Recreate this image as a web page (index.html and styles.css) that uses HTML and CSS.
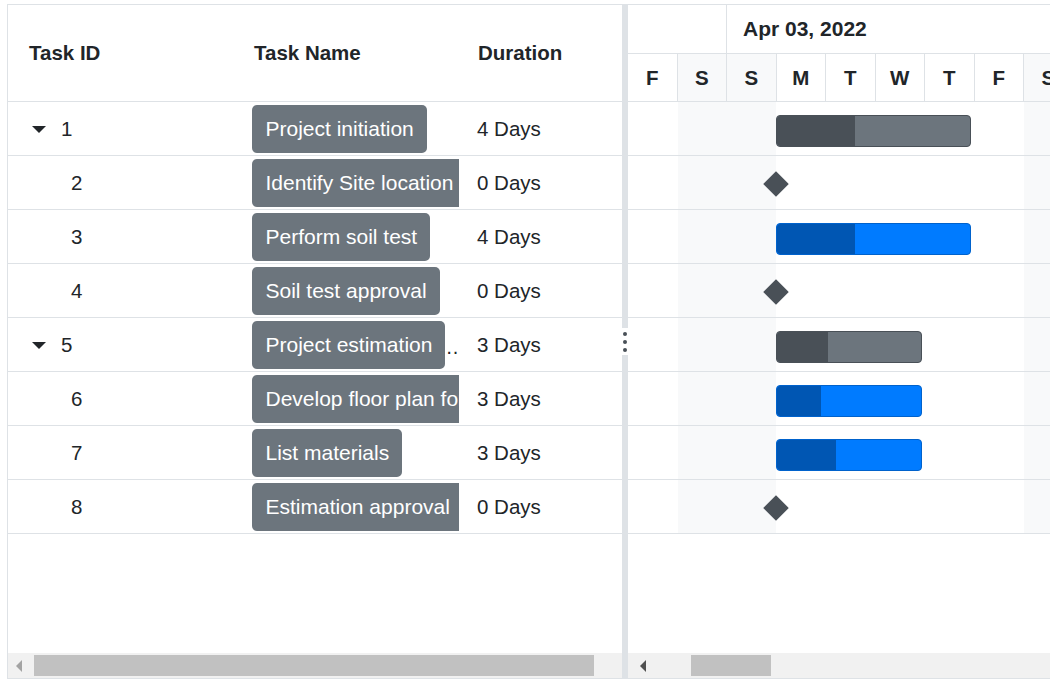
FILE: index.html
```html
<!DOCTYPE html>
<html>
<head>
<meta charset="utf-8">
<link rel="stylesheet" href="styles.css">
</head>
<body>
<div class="gantt">
  <div class="grid-pane">
    <div class="grid-head">
      <div class="hcell c-id">Task ID</div>
      <div class="hcell c-name">Task Name</div>
      <div class="hcell c-dur">Duration</div>
    </div>
    <div class="grid-body">
      <div class="row">
        <div class="cell c-id"><span class="caret"></span><span>1</span></div>
        <div class="cell c-name"><span class="chip">Project initiation</span></div>
        <div class="cell c-dur">4 Days</div>
      </div>
      <div class="row">
        <div class="cell c-id"><span class="child-id">2</span></div>
        <div class="cell c-name"><span class="chip">Identify Site location</span></div>
        <div class="cell c-dur">0 Days</div>
      </div>
      <div class="row">
        <div class="cell c-id"><span class="child-id">3</span></div>
        <div class="cell c-name"><span class="chip">Perform soil test</span></div>
        <div class="cell c-dur">4 Days</div>
      </div>
      <div class="row">
        <div class="cell c-id"><span class="child-id">4</span></div>
        <div class="cell c-name"><span class="chip">Soil test approval</span></div>
        <div class="cell c-dur">0 Days</div>
      </div>
      <div class="row">
        <div class="cell c-id"><span class="caret"></span><span>5</span></div>
        <div class="cell c-name"><span class="chip">Project estimation</span><span class="ellipsis">…</span></div>
        <div class="cell c-dur">3 Days</div>
      </div>
      <div class="row">
        <div class="cell c-id"><span class="child-id">6</span></div>
        <div class="cell c-name"><span class="chip">Develop floor plan for estimation</span></div>
        <div class="cell c-dur">3 Days</div>
      </div>
      <div class="row">
        <div class="cell c-id"><span class="child-id">7</span></div>
        <div class="cell c-name"><span class="chip">List materials</span></div>
        <div class="cell c-dur">3 Days</div>
      </div>
      <div class="row">
        <div class="cell c-id"><span class="child-id">8</span></div>
        <div class="cell c-name"><span class="chip">Estimation approval</span></div>
        <div class="cell c-dur">0 Days</div>
      </div>
    </div>
    <div class="filler"></div>
    <div class="hscroll">
      <div class="sb-btn"><svg width="7" height="12" viewBox="0 0 7 12"><polygon points="6,0 6,12 0,6" fill="#a3a3a3"/></svg></div>
      <div class="thumb thumb-left"></div>
    </div>
  </div>

  <div class="splitter">
    <div class="sp-top"></div>
    <div class="sp-handle"><span class="dot"></span><span class="dot"></span><span class="dot"></span></div>
    <div class="sp-bot"></div>
  </div>

  <div class="chart-pane">
    <div class="tl-head">
      <div class="tl-top">
        <div class="tl-week prev"></div>
        <div class="tl-week">Apr 03, 2022</div>
      </div>
      <div class="tl-days">
        <div class="day">F</div>
        <div class="day weekend">S</div>
        <div class="day weekend">S</div>
        <div class="day">M</div>
        <div class="day">T</div>
        <div class="day">W</div>
        <div class="day">T</div>
        <div class="day">F</div>
        <div class="day weekend">S</div>
      </div>
    </div>
    <div class="chart-body">
      <div class="crow">
        <div class="bar parent" style="left:148px;width:195px"><div class="prog" style="width:78px"></div></div>
      </div>
      <div class="crow">
        <div class="milestone"></div>
      </div>
      <div class="crow">
        <div class="bar child" style="left:148px;width:195px"><div class="prog" style="width:78px"></div></div>
      </div>
      <div class="crow">
        <div class="milestone"></div>
      </div>
      <div class="crow">
        <div class="bar parent" style="left:148px;width:146px"><div class="prog" style="width:51px"></div></div>
      </div>
      <div class="crow">
        <div class="bar child" style="left:148px;width:146px"><div class="prog" style="width:44px"></div></div>
      </div>
      <div class="crow">
        <div class="bar child" style="left:148px;width:146px"><div class="prog" style="width:59px"></div></div>
      </div>
      <div class="crow">
        <div class="milestone"></div>
      </div>
    </div>
    <div class="filler"></div>
    <div class="hscroll">
      <div class="sb-btn sb-btn-right"><svg width="7" height="12" viewBox="0 0 7 12"><polygon points="6,0 6,12 0,6" fill="#505050"/></svg></div>
      <div class="thumb thumb-right"></div>
    </div>
  </div>
</div>
</body>
</html>
```

FILE: styles.css
```css
html, body {
  margin: 0;
  padding: 0;
  background: #fff;
  overflow: hidden;
}

body {
  font-family: "Liberation Sans", Arial, sans-serif;
  color: #212529;
}

.gantt {
  display: flex;
  margin: 4px 0 0 7px;
  width: 1100px;
  height: 675px;
  border: 1px solid #dee2e6;
  box-sizing: border-box;
}

/* ---------- left grid ---------- */
.grid-pane {
  width: 614px;
  flex-shrink: 0;
  display: flex;
  flex-direction: column;
}

.grid-head {
  height: 97px;
  box-sizing: border-box;
  border-bottom: 1px solid #dee2e6;
  display: flex;
  align-items: center;
  font-weight: bold;
  font-size: 20.5px;
}

.hcell {
  box-sizing: border-box;
}

.hcell.c-id { padding-left: 21px; }
.hcell.c-name { padding-left: 14px; }
.hcell.c-dur { padding-left: 19px; }

.c-id { width: 232px; flex-shrink: 0; }
.c-name { width: 219px; flex-shrink: 0; }
.c-dur { flex: 1; }

.row {
  height: 54px;
  box-sizing: border-box;
  border-bottom: 1px solid #dee2e6;
  display: flex;
  align-items: center;
  font-size: 20.5px;
}

.cell {
  box-sizing: border-box;
  display: flex;
  align-items: center;
  height: 100%;
  padding-top: 1px;
}

.cell.c-id { padding-left: 24px; }

.caret {
  width: 0;
  height: 0;
  border-left: 7px solid transparent;
  border-right: 7px solid transparent;
  border-top: 7px solid #212529;
  margin-right: 15px;
}

.child-id { margin-left: 39px; }

.cell.c-name {
  padding-left: 12px;
  padding-top: 0;
  overflow: hidden;
  white-space: nowrap;
}

.chip {
  flex-shrink: 0;
  display: block;
  height: 48px;
  line-height: 48px;
  padding: 0 13px 0 13.5px;
  background: #6c757d;
  color: #fff;
  border-radius: 5px;
  font-size: 21px;
  white-space: nowrap;
}

.ellipsis {
  flex-shrink: 0;
  font-size: 20px;
  letter-spacing: 3px;
  padding-top: 6px;
}

.cell.c-dur { padding-left: 18px; }

.filler { flex: 1; }

.hscroll {
  height: 25px;
  flex-shrink: 0;
  background: #f1f1f1;
  display: flex;
  align-items: flex-start;
}

.sb-btn {
  width: 26px;
  height: 25px;
  flex-shrink: 0;
  display: flex;
  align-items: center;
  justify-content: center;
}

.sb-btn svg { display: block; margin-left: -4px; }

.sb-btn-right { width: 22px; }
.sb-btn-right svg { margin-left: 8px; }

.thumb {
  height: 21px;
  margin-top: 2px;
  background: #c1c1c1;
}

.thumb-left { width: 560px; }
.thumb-right { width: 80px; margin-left: 41px; }

/* ---------- splitter ---------- */
.splitter {
  width: 6px;
  flex-shrink: 0;
  display: flex;
  flex-direction: column;
}

.sp-top {
  height: 323px;
  background: #dee2e6;
}

.sp-handle {
  height: 27px;
  background: #fff;
  display: flex;
  flex-direction: column;
  align-items: center;
  justify-content: center;
  gap: 4px;
}

.dot {
  width: 4px;
  height: 4px;
  border-radius: 50%;
  background: #495057;
}

.sp-bot {
  flex: 1;
  background: #dee2e6;
}

/* ---------- chart ---------- */
.chart-pane {
  flex: 1;
  min-width: 0;
  display: flex;
  flex-direction: column;
  overflow: hidden;
}

.tl-head {
  height: 97px;
  box-sizing: border-box;
  border-bottom: 1px solid #dee2e6;
  font-weight: bold;
}

.tl-top {
  height: 49px;
  box-sizing: border-box;
  border-bottom: 1px solid #dee2e6;
  display: flex;
}

.tl-week {
  flex: 1;
  display: flex;
  align-items: center;
  padding-left: 16px;
  font-size: 21px;
}

.tl-week.prev {
  flex: 0 0 99px;
  box-sizing: border-box;
  border-right: 1px solid #dee2e6;
  padding: 0;
}

.tl-days {
  height: 47px;
  display: grid;
  grid-template-columns: repeat(9, 49.5px);
  font-size: 20.5px;
}

.day {
  box-sizing: border-box;
  border-right: 1px solid #dee2e6;
  display: flex;
  align-items: center;
  justify-content: center;
}

.day.weekend { background: #f8f9fa; }

.chart-body {
  background: linear-gradient(to right,
    #fff 0, #fff 49.5px,
    #f8f9fa 49.5px, #f8f9fa 148.5px,
    #fff 148.5px, #fff 396px,
    #f8f9fa 396px, #f8f9fa 445.5px,
    #fff 445.5px);
}

.crow {
  position: relative;
  height: 54px;
  box-sizing: border-box;
  border-bottom: 1px solid #dee2e6;
}

.bar {
  position: absolute;
  top: 13px;
  height: 32px;
  box-sizing: border-box;
  border-radius: 4px;
  display: flex;
  overflow: hidden;
}

.bar .prog {
  height: 100%;
  border-radius: 3px 0 0 3px;
}

.bar.parent {
  background: #6c757d;
  border: 1px solid #495057;
}

.bar.parent .prog { background: #495057; }

.bar.child {
  background: #007bff;
  border: 1px solid #0062cc;
}

.bar.child .prog { background: #0056b3; }

.milestone {
  position: absolute;
  left: 138.5px;
  top: 19px;
  width: 18px;
  height: 18px;
  background: #495057;
  transform: rotate(45deg);
}
```
